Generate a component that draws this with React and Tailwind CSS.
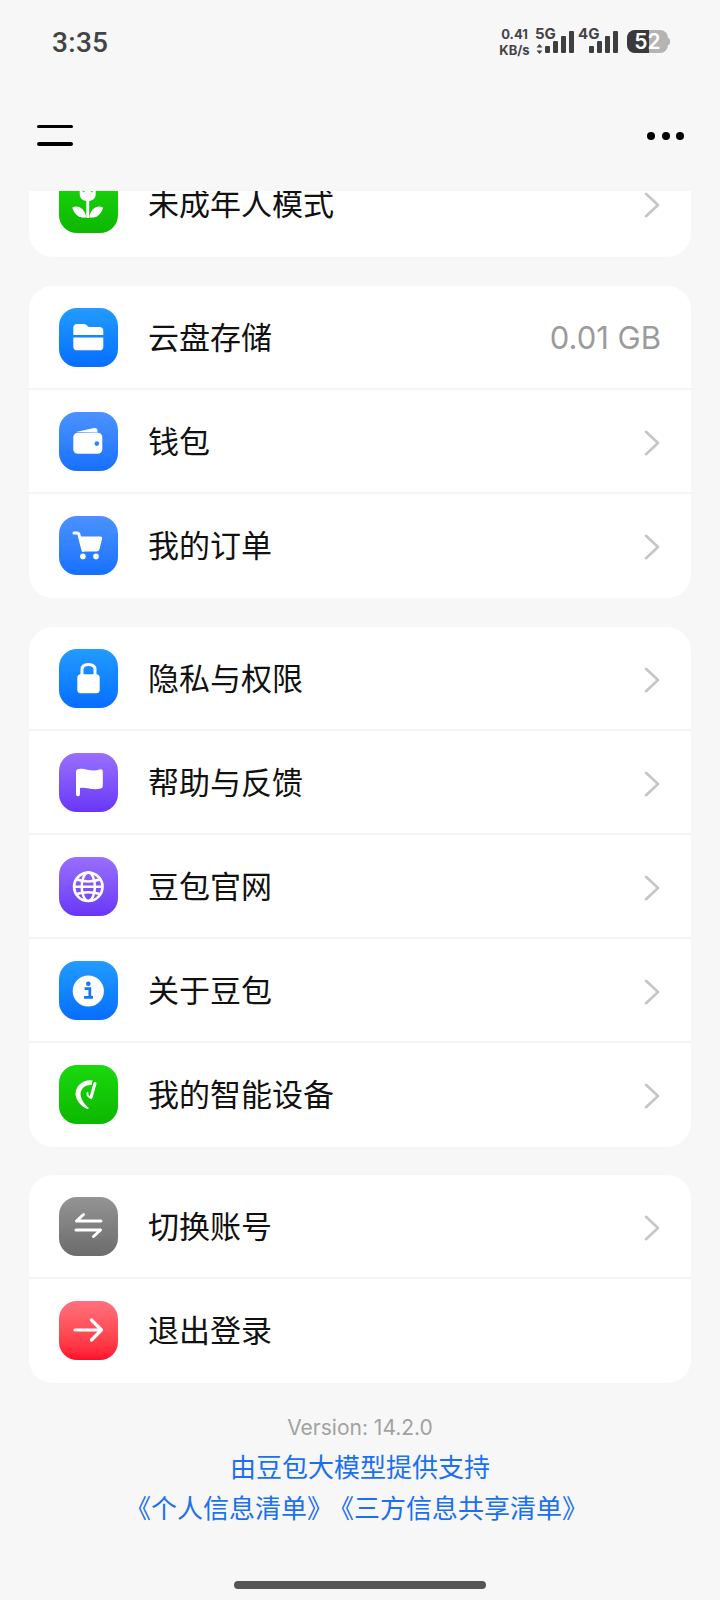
const cjk = { fontFamily: '"Noto Sans CJK SC", "Noto Sans", sans-serif' };

function Chevron() {
  return (
    <svg width="16" height="26" viewBox="0 0 16 26" fill="none" className="mr-[1px] mt-[4px]">
      <path d="M2 1.8 L14 13 L2 24.2" stroke="#c6c6c6" strokeWidth="2.6" strokeLinecap="round" strokeLinejoin="round" />
    </svg>
  );
}

const G = ({ children }) => (
  <svg width="59" height="59" viewBox="0 0 59 59" fill="none">{children}</svg>
);

const icons = {
  tulip: (
    <G>
      <path d="M20.7 12 H36.7 V20 C36.7 24.5 33.5 27 28.7 27 C23.9 27 20.7 24.5 20.7 20 Z" fill="#fff" />
      <circle cx="24.6" cy="17.2" r="1.1" fill="#3fd636" />
      <circle cx="32.8" cy="17.2" r="1.1" fill="#3fd636" />
      <rect x="27.3" y="26" width="2.9" height="18" fill="#fff" />
      <path d="M13.3 33.5 C19.5 30.5 26 35 27.3 43.6 C20.5 44.5 15 40.5 13.3 33.5 Z" fill="#fff" />
      <path d="M44.1 33.5 C37.9 30.5 31.4 35 30.2 43.6 C37 44.5 42.4 40.5 44.1 33.5 Z" fill="#fff" />
    </G>
  ),
  folder: (
    <G>
      <path d="M14.3 27 V20 Q14.3 16 18.3 16 H25 Q27 16 28 17.5 Q29 19 31 19 H40.3 Q44.3 19 44.3 23 V27 Z" fill="#fff" />
      <path d="M14.3 29.6 H44.3 V38.4 Q44.3 42.3 40.3 42.3 H18.3 Q14.3 42.3 14.3 38.4 Z" fill="#fff" />
    </G>
  ),
  wallet: (
    <G>
      <path d="M17 20 L35 16 Q38.5 15.6 38.5 19 V20.5 Z" fill="#fff" />
      <rect x="14.3" y="20.8" width="29" height="21" rx="4.5" fill="#fff" />
      <circle cx="37.8" cy="31.6" r="2.3" fill="#2f7fff" />
    </G>
  ),
  cart: (
    <G>
      <path d="M15 17 H18 Q19.6 17 20 18.6 L24 34.5" stroke="#fff" strokeWidth="3" strokeLinecap="round" />
      <path d="M20.5 20.5 H41.5 Q43.6 20.5 43.1 22.6 L40.6 33 Q40 35.6 37.4 35.6 H24.6 Z" fill="#fff" />
      <circle cx="23.9" cy="40.4" r="2.8" fill="#fff" />
      <circle cx="37" cy="40.4" r="2.8" fill="#fff" />
    </G>
  ),
  lock: (
    <G>
      <path d="M23 27 V20.5 C23 16.8 25.6 15.5 29.5 15.5 C33.4 15.5 36 16.8 36 20.5 V27" stroke="#fff" strokeWidth="3" />
      <rect x="18.3" y="25.3" width="22.4" height="19" rx="3.6" fill="#fff" />
    </G>
  ),
  flag: (
    <G>
      <path d="M17 19 Q17 16 20 16 C26 14.5 32 19.5 40.5 16.5 Q43.8 15.6 43.8 18.8 V33 Q43.8 35 41.8 35.5 C33 38 27.5 33.5 21 35 V41.5 Q21 43.2 19 43.2 Q17 43.2 17 41.5 Z" fill="#fff" />
    </G>
  ),
  globe: (
    <G>
      <circle cx="29.3" cy="29.8" r="14.2" stroke="#fff" strokeWidth="2.7" />
      <ellipse cx="29.3" cy="29.8" rx="6.6" ry="14.2" stroke="#fff" strokeWidth="2.5" />
      <path d="M15.3 29.8 H43.3 M18 22.5 C24 25 34.5 25 40.6 22.5 M18 37 C24 34.6 34.5 34.6 40.6 37" stroke="#fff" strokeWidth="2.5" />
    </G>
  ),
  info: (
    <G>
      <circle cx="29.3" cy="30" r="15.6" fill="#fff" />
      <circle cx="29.3" cy="22.8" r="2.3" fill="#1078ff" />
      <path d="M25.6 27.6 H30.8 V36.2 H33.4 M25 36.4 H34" stroke="#1078ff" strokeWidth="2.7" />
    </G>
  ),
  ear: (
    <G>
      <path d="M33.5 15.5 C25 14 17 20 16.5 28.5 C16.5 35 22 41.5 28.5 44 C29.5 44.2 30 43 29 42.2 C25 38.5 21.5 34 21.5 28.5 C22 23 27 19.5 32.5 20 Z" fill="#fff" />
      <path d="M36 18.5 L32 32.5" stroke="#fff" strokeWidth="3" strokeLinecap="round" />
      <path d="M32 32.5 C29.5 32 28 30.5 28.5 28" stroke="#fff" strokeWidth="1.8" strokeLinecap="round" />
    </G>
  ),
  swap: (
    <G>
      <path d="M17.5 24 H42 M24.5 17.5 L17.5 24" stroke="#fff" strokeWidth="3" strokeLinecap="round" strokeLinejoin="round" />
      <path d="M41.5 33 H17 M34.5 39.5 L41.5 33" stroke="#fff" strokeWidth="3" strokeLinecap="round" strokeLinejoin="round" />
    </G>
  ),
  arrow: (
    <G>
      <path d="M16 29 H42.5 M32.5 19 L42.5 29 L32.5 39" stroke="#fff" strokeWidth="3.2" strokeLinecap="round" strokeLinejoin="round" />
    </G>
  ),
};

const tones = {
  green: 'bg-gradient-to-b from-[#1ad90e] to-[#0cb700]',
  blue: 'bg-gradient-to-b from-[#239bff] to-[#0a6dff]',
  mid: 'bg-gradient-to-b from-[#4b92ff] to-[#1470ff]',
  purple: 'bg-gradient-to-b from-[#9a6eff] to-[#6a34f6]',
  gray: 'bg-gradient-to-b from-[#949494] to-[#6c6c6c]',
  red: 'bg-gradient-to-b from-[#ff707c] to-[#ff0a2c]',
};

function Row({ icon, tone, label, value, chevron = true, last = false }) {
  return (
    <div className={`flex shrink-0 w-full h-[104px] items-center pl-[30px] pr-[30px] ${last ? 'pb-[2px]' : 'border-b-2 border-[#f4f4f4]'}`}>
      <div className={`w-[59px] h-[59px] rounded-[18px] shrink-0 ${tones[tone]}`}>{icons[icon]}</div>
      <div className="ml-[30px] pb-[4px] flex-1 text-[31px] leading-none text-[#111111]" style={cjk}>{label}</div>
      {value ? (
        <div className="text-[31px] leading-none text-[#9b9b9b] font-['Inter',sans-serif] mt-[1px]">{value}</div>
      ) : chevron ? <Chevron /> : null}
    </div>
  );
}

function Card({ className, children }) {
  return <div className={`mx-[29px] bg-white rounded-[24px] overflow-hidden ${className}`}>{children}</div>;
}

function Bars() {
  return (
    <div className="flex items-end gap-[3.5px] h-[22px]">
      <div className="w-[4.5px] h-[7px] bg-[#3f3f3f] rounded-[1px]" />
      <div className="w-[4.5px] h-[12px] bg-[#3f3f3f] rounded-[1px]" />
      <div className="w-[4.5px] h-[17px] bg-[#3f3f3f] rounded-[1px]" />
      <div className="w-[4.5px] h-[22px] bg-[#3f3f3f] rounded-[1px]" />
    </div>
  );
}

function StatusBar() {
  return (
    <div className="h-[85px] flex items-start justify-between shrink-0 font-['Inter',sans-serif]">
      <div className="ml-[52px] mt-[27px] text-[28px] leading-[32px] font-medium text-[#444] font-['Roboto',sans-serif] tracking-[0.3px]">3:35</div>
      <div className="flex mt-[28px] mr-[50px] text-[#444] font-bold">
        <div className="w-[31px] text-[13px] leading-[15px] text-center">
          <div className="-mt-[1px]">0.41</div>
          <div className="mt-[1px]">KB/s</div>
        </div>
        <div className="relative ml-[5px] w-[39px] h-[25px] mt-[3px]">
          <div className="absolute left-0 -top-[5px] text-[15px] leading-[15px]">5G</div>
          <svg className="absolute left-[1px] top-[13px]" width="7" height="10" viewBox="0 0 7 10">
            <path d="M3.5 0 L6.5 3.6 H0.5 Z M3.5 10 L6.5 6.4 H0.5 Z" fill="#444" />
          </svg>
          <div className="absolute left-[10px] top-0"><Bars /></div>
        </div>
        <div className="relative ml-[4px] w-[39px] h-[25px] mt-[3px]">
          <div className="absolute left-0 -top-[5px] text-[15px] leading-[15px]">4G</div>
          <div className="absolute left-[11px] top-0"><Bars /></div>
        </div>
        <div className="relative ml-[10px] w-[41px] h-[23px] mt-[2px] rounded-[8px] bg-[#b4b4b4] overflow-hidden">
          <div className="absolute inset-y-0 left-0 w-[22px] bg-[#3a3a3a]" />
          <div className="absolute inset-0 flex items-center justify-center text-white text-[21px] leading-none font-semibold">52</div>
        </div>
        <div className="w-[2px] h-[7px] mt-[10px] bg-[#b4b4b4] rounded-r-[2px]" />
      </div>
    </div>
  );
}

function NavBar() {
  return (
    <div className="h-[106px] flex items-center justify-between shrink-0 pl-[37px] pr-[36px] pt-[7px]">
      <div className="flex flex-col gap-[14px] w-[36px] -mt-[13px]">
        <div className="h-[3.5px] bg-black rounded-full" />
        <div className="h-[3.5px] bg-black rounded-full" />
      </div>
      <div className="flex gap-[6.5px] -mt-[11px]">
        <div className="w-[8px] h-[8px] rounded-full bg-black" />
        <div className="w-[8px] h-[8px] rounded-full bg-black" />
        <div className="w-[8px] h-[8px] rounded-full bg-black" />
      </div>
    </div>
  );
}

export default function App() {
  return (
    <div className="w-[720px] h-[1600px] bg-[#f7f7f7] flex flex-col overflow-hidden">
      <StatusBar />
      <NavBar />
      <div className="mx-[29px] mb-[29px] bg-white rounded-b-[24px] h-[66px] pb-[1px] overflow-hidden flex flex-col justify-end shrink-0">
        <Row icon="tulip" tone="green" label="未成年人模式" last />
      </div>
      <Card className="mb-[29px]">
        <Row icon="folder" tone="blue" label="云盘存储" value="0.01 GB" />
        <Row icon="wallet" tone="mid" label="钱包" />
        <Row icon="cart" tone="mid" label="我的订单" last />
      </Card>
      <Card className="mb-[28px]">
        <Row icon="lock" tone="blue" label="隐私与权限" />
        <Row icon="flag" tone="purple" label="帮助与反馈" />
        <Row icon="globe" tone="purple" label="豆包官网" />
        <Row icon="info" tone="blue" label="关于豆包" />
        <Row icon="ear" tone="green" label="我的智能设备" last />
      </Card>
      <Card className="mb-[30px]">
        <Row icon="swap" tone="gray" label="切换账号" />
        <Row icon="arrow" tone="red" label="退出登录" chevron={false} last />
      </Card>
      <div className="flex flex-col items-center">
        <div className="text-[21px] leading-[30px] text-[#a2a2a2] font-['Inter',sans-serif]">Version: 14.2.0</div>
        <div className="mt-[3px] text-[26px] leading-[40px] text-[#1a70f0]" style={cjk}>由豆包大模型提供支持</div>
        <div className="mt-[1px] pr-[7px] flex gap-[3px] text-[26px] leading-[40px] text-[#1a70f0]" style={cjk}>
          <span className="-mr-[8px]">《个人信息清单》</span>
          <span>《三方信息共享清单》</span>
        </div>
      </div>
      <div className="mt-auto mb-[11px] mx-auto w-[252px] h-[8px] rounded-full bg-[#555555] shrink-0" />
    </div>
  );
}
